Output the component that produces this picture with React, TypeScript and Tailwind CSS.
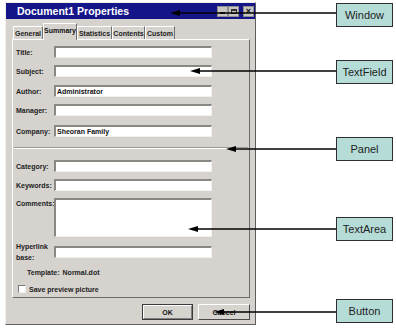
import React from "react";

const F = "font-['Liberation_Sans',Arial,sans-serif]";

function Input({ value, h = "h-[12px]" }: { value?: string; h?: string }) {
  return (
    <div
      className={`w-[158px] ${h} bg-white border-t-2 border-l-2 border-t-[#8a8883] border-l-[#8a8883] border-b border-r border-b-[#f2f1ee] border-r-[#f2f1ee] flex items-center pl-[1px] text-[7px] font-bold leading-none text-[#111]`}
    >
      {value}
    </div>
  );
}

function Row({ label, value, mt }: { label: string; value?: string; mt: string }) {
  return (
    <div className={`flex items-center ${mt}`}>
      <div className="w-[41px] pl-[3px] text-[7px] font-bold text-[#222] leading-none">{label}</div>
      <Input value={value} />
    </div>
  );
}

function Tab({ label, w, selected }: { label: string; w: string; selected?: boolean }) {
  if (selected) {
    return (
      <div
        className={`${w} h-[17px] -mb-[1px] relative z-10 bg-[#d6d3ce] border-t border-l border-t-white border-l-white border-r border-r-[#6e6e6e] flex items-start justify-center pt-[3px] text-[7px] font-bold leading-none text-[#111]`}
      >
        {label}
      </div>
    );
  }
  return (
    <div
      className={`${w} h-[13px] border-t border-l border-t-white border-l-white border-r border-r-[#6e6e6e] flex items-center justify-center text-[7px] font-bold leading-none text-[#222]`}
    >
      {label}
    </div>
  );
}

function Window() {
  return (
    <div className="ml-[5px] mt-[2px] w-[251px] h-[323px] bg-[#d6d3ce] border border-t-[#efeeea] border-l-[#efeeea] border-r-[#5e5e5e] border-b-[#5e5e5e] flex flex-col">
      {/* title bar */}
      <div className="h-[16px] bg-[#15158a] flex items-center">
        <div className="pl-[11px] text-[10.5px] font-bold text-white leading-none">Document1 Properties</div>
        <div className="ml-auto flex items-center mr-[1px]">
          <div className="w-[11px] h-[11px] bg-[#c8c6c2] border border-[#8e8e8e] flex items-end justify-center pb-[2px]">
            <div className="w-[5px] h-[1.5px] bg-[#222]" />
          </div>
          <div className="w-[11px] h-[11px] bg-[#c8c6c2] border border-[#8e8e8e] flex items-center justify-center">
            <div className="w-[6px] h-[5px] border border-[#333] border-t-2" />
          </div>
          <div className="ml-[4px] w-[11px] h-[11px] bg-[#c8c6c2] border border-[#8e8e8e] flex items-center justify-center text-[9px] font-bold leading-none text-[#111]">
            ×
          </div>
        </div>
      </div>
      {/* tabs */}
      <div className="ml-[7px] mt-[5px] h-[15px] flex items-end">
        <Tab label="General" w="w-[30px]" />
        <Tab label="Summary" w="w-[34px]" selected />
        <Tab label="Statistics" w="w-[35px]" />
        <Tab label="Contents" w="w-[33px]" />
        <Tab label="Custom" w="w-[30px]" />
      </div>
      {/* panel */}
      <div className="ml-[6px] mr-[5px] h-[259px] border border-t-white border-l-white border-r-[#6a6a6a] border-b-[#6a6a6a] flex flex-col">
        <Row label="Title:" mt="mt-[6px]" />
        <Row label="Subject:" mt="mt-[7px]" />
        <Row label="Author:" value="Administrator" mt="mt-[8px]" />
        <Row label="Manager:" mt="mt-[7px]" />
        <Row label="Company:" value="Sheoran Family" mt="mt-[9px]" />
        <div className="mt-[10px] mx-[1px] h-[2px] border-t border-t-[#9a9894] border-b border-b-white" />
        <Row label="Category:" mt="mt-[11px]" />
        <Row label="Keywords:" mt="mt-[7px]" />
        <div className="flex items-start mt-[7px]">
          <div className="w-[41px] pl-[3px] pt-[2px] text-[7px] font-bold text-[#222] leading-none">Comments:</div>
          <Input h="h-[39px]" />
        </div>
        <div className="flex items-center mt-[4px]">
          <div className="w-[41px] pl-[3px] text-[7px] font-bold text-[#222] leading-[11px]">
            Hyperlink
            <br />
            base:
          </div>
          <Input />
        </div>
        <div className="mt-[4px] h-[10px] pl-[14px] flex items-center text-[7px] font-bold text-[#222] leading-none">
          <span>Template:</span>
          <span className="ml-[3px]">Normal.dot</span>
        </div>
        <div className="mt-[7px] h-[10px] pl-[5px] flex items-center text-[7px] font-bold text-[#222] leading-none">
          <div className="w-[8px] h-[8px] bg-white border-t border-l border-t-[#7a7a7a] border-l-[#7a7a7a] border-b border-r border-b-[#f2f2f2] border-r-[#f2f2f2]" />
          <span className="ml-[3px]">Save preview picture</span>
        </div>
      </div>
      {/* buttons */}
      <div className="mt-[6px] mr-[5px] flex justify-end gap-[5px]">
        <div className="w-[51px] h-[16px] border border-[#3a3a3a] flex">
          <div className="flex-1 border-t border-l border-t-white border-l-white border-r border-b border-r-[#808080] border-b-[#808080] flex items-center justify-center text-[7px] font-bold leading-none text-[#111]">
            OK
          </div>
        </div>
        <div className="w-[52px] h-[16px] border-t border-l border-t-white border-l-white border-r border-b border-r-[#4a4a4a] border-b-[#4a4a4a] flex items-center justify-center text-[7px] font-bold leading-none text-[#111]">
          Cancel
        </div>
      </div>
    </div>
  );
}

function Callout({ label, mt }: { label: string; mt: string }) {
  return (
    <div
      className={`${mt} w-[57px] h-[24px] bg-[#b6dcd8] border border-[#2e2e2e] flex items-center justify-center text-[11px] text-[#1e1e1e] leading-none`}
    >
      {label}
    </div>
  );
}

function Arrow({ y, tip }: { y: number; tip: number }) {
  return (
    <g>
      <line x1={tip + 6} y1={y} x2={336} y2={y} stroke="#000" strokeWidth={1.6} />
      <polygon points={`${tip},${y} ${tip + 10},${y - 3} ${tip + 10},${y + 3}`} fill="#000" />
    </g>
  );
}

export default function App() {
  return (
    <div className={`relative w-[396px] h-[329px] bg-white overflow-hidden ${F}`}>
      <div className="flex">
        <Window />
        <div className="ml-[80px] flex flex-col">
          <Callout label="Window" mt="mt-[3px]" />
          <Callout label="TextField" mt="mt-[33px]" />
          <Callout label="Panel" mt="mt-[53px]" />
          <Callout label="TextArea" mt="mt-[56px]" />
          <Callout label="Button" mt="mt-[58px]" />
        </div>
      </div>
      <svg className="absolute inset-0 pointer-events-none" width={396} height={329}>
        <Arrow y={13} tip={170} />
        <Arrow y={71} tip={190} />
        <Arrow y={149} tip={226} />
        <Arrow y={229} tip={188} />
        <Arrow y={312} tip={214} />
      </svg>
    </div>
  );
}
